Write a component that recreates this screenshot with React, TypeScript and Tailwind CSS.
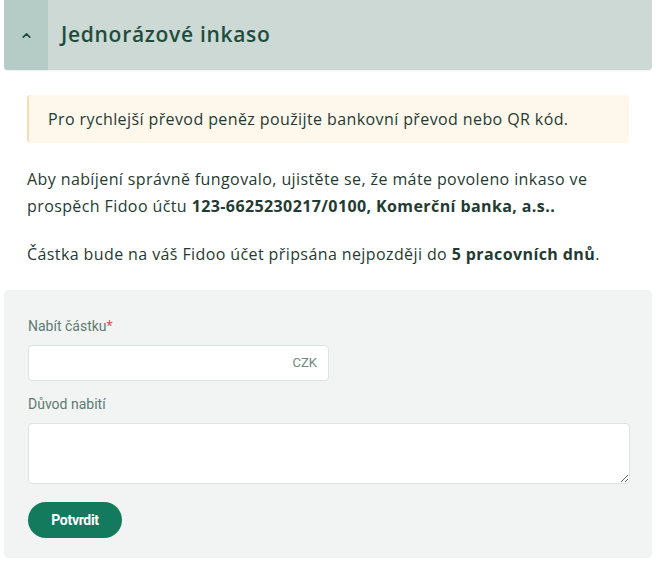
import { ChevronUp } from "lucide-react";

export default function App() {
  return (
    <div className="w-[656px] h-[570px] bg-white font-['Open_Sans',sans-serif] text-[#1f3b32]">
      <div className="mx-1 flex h-[70px] overflow-hidden rounded-b-[4px] bg-[#cdd9d4] shadow-[0_1px_1px_rgba(0,0,0,0.06)]">
        <div className="flex w-[44px] items-center justify-center bg-[#b5cbc5]">
          <ChevronUp size={13} strokeWidth={3} className="text-[#1e4d3d]" />
        </div>
        <div className="flex items-center pl-[13px] text-[21px] font-semibold tracking-[0.7px] text-[#1e4d3d]">
          Jednorázové inkaso
        </div>
      </div>

      <div className="px-[27px] pt-[25px] text-[16px] tracking-[0.4px]">
        <div className="flex h-[48px] items-center rounded-[4px] border-l-2 border-[#f6dcb3] bg-[#fef7ec] pl-[19px]">
          Pro rychlejší převod peněz použijte bankovní převod nebo QR kód.
        </div>

        <p className="mt-[23px] leading-[27px]">
          Aby nabíjení správně fungovalo, ujistěte se, že máte povoleno inkaso ve prospěch Fidoo účtu{" "}
          <span className="font-bold">123-6625230217/0100, Komerční banka, a.s..</span>
        </p>
        <p className="mt-[21px] leading-[27px]">
          Částka bude na váš Fidoo účet připsána nejpozději do <span className="font-bold">5 pracovních dnů</span>.
        </p>
      </div>

      <div className="mx-1 mt-[22px] flex h-[268px] flex-col rounded-[4px] bg-[#f2f4f3] px-[24px] pt-[26px] font-['Roboto',sans-serif]">
        <label className="text-[14px] text-[#5e7a71]">
          Nabít částku<span className="text-[#d9534f]">*</span>
        </label>
        <div className="mt-[8px] flex h-[36px] w-[301px] items-center justify-end rounded-[4px] border border-[#dde3e0] bg-white pr-[11px] text-[13px] text-[#6f8a80]">
          CZK
        </div>
        <label className="mt-[13px] text-[14px] text-[#5e7a71]">Důvod nabití</label>
        <textarea className="mt-[8px] h-[61px] w-[602px] resize-y rounded-[4px] border border-[#dde3e0] bg-white" />
        <button className="mt-[18px] h-[36px] w-[94px] rounded-full bg-[#137a5d] text-[14px] font-bold tracking-[-0.3px] text-white">
          Potvrdit
        </button>
      </div>
    </div>
  );
}
